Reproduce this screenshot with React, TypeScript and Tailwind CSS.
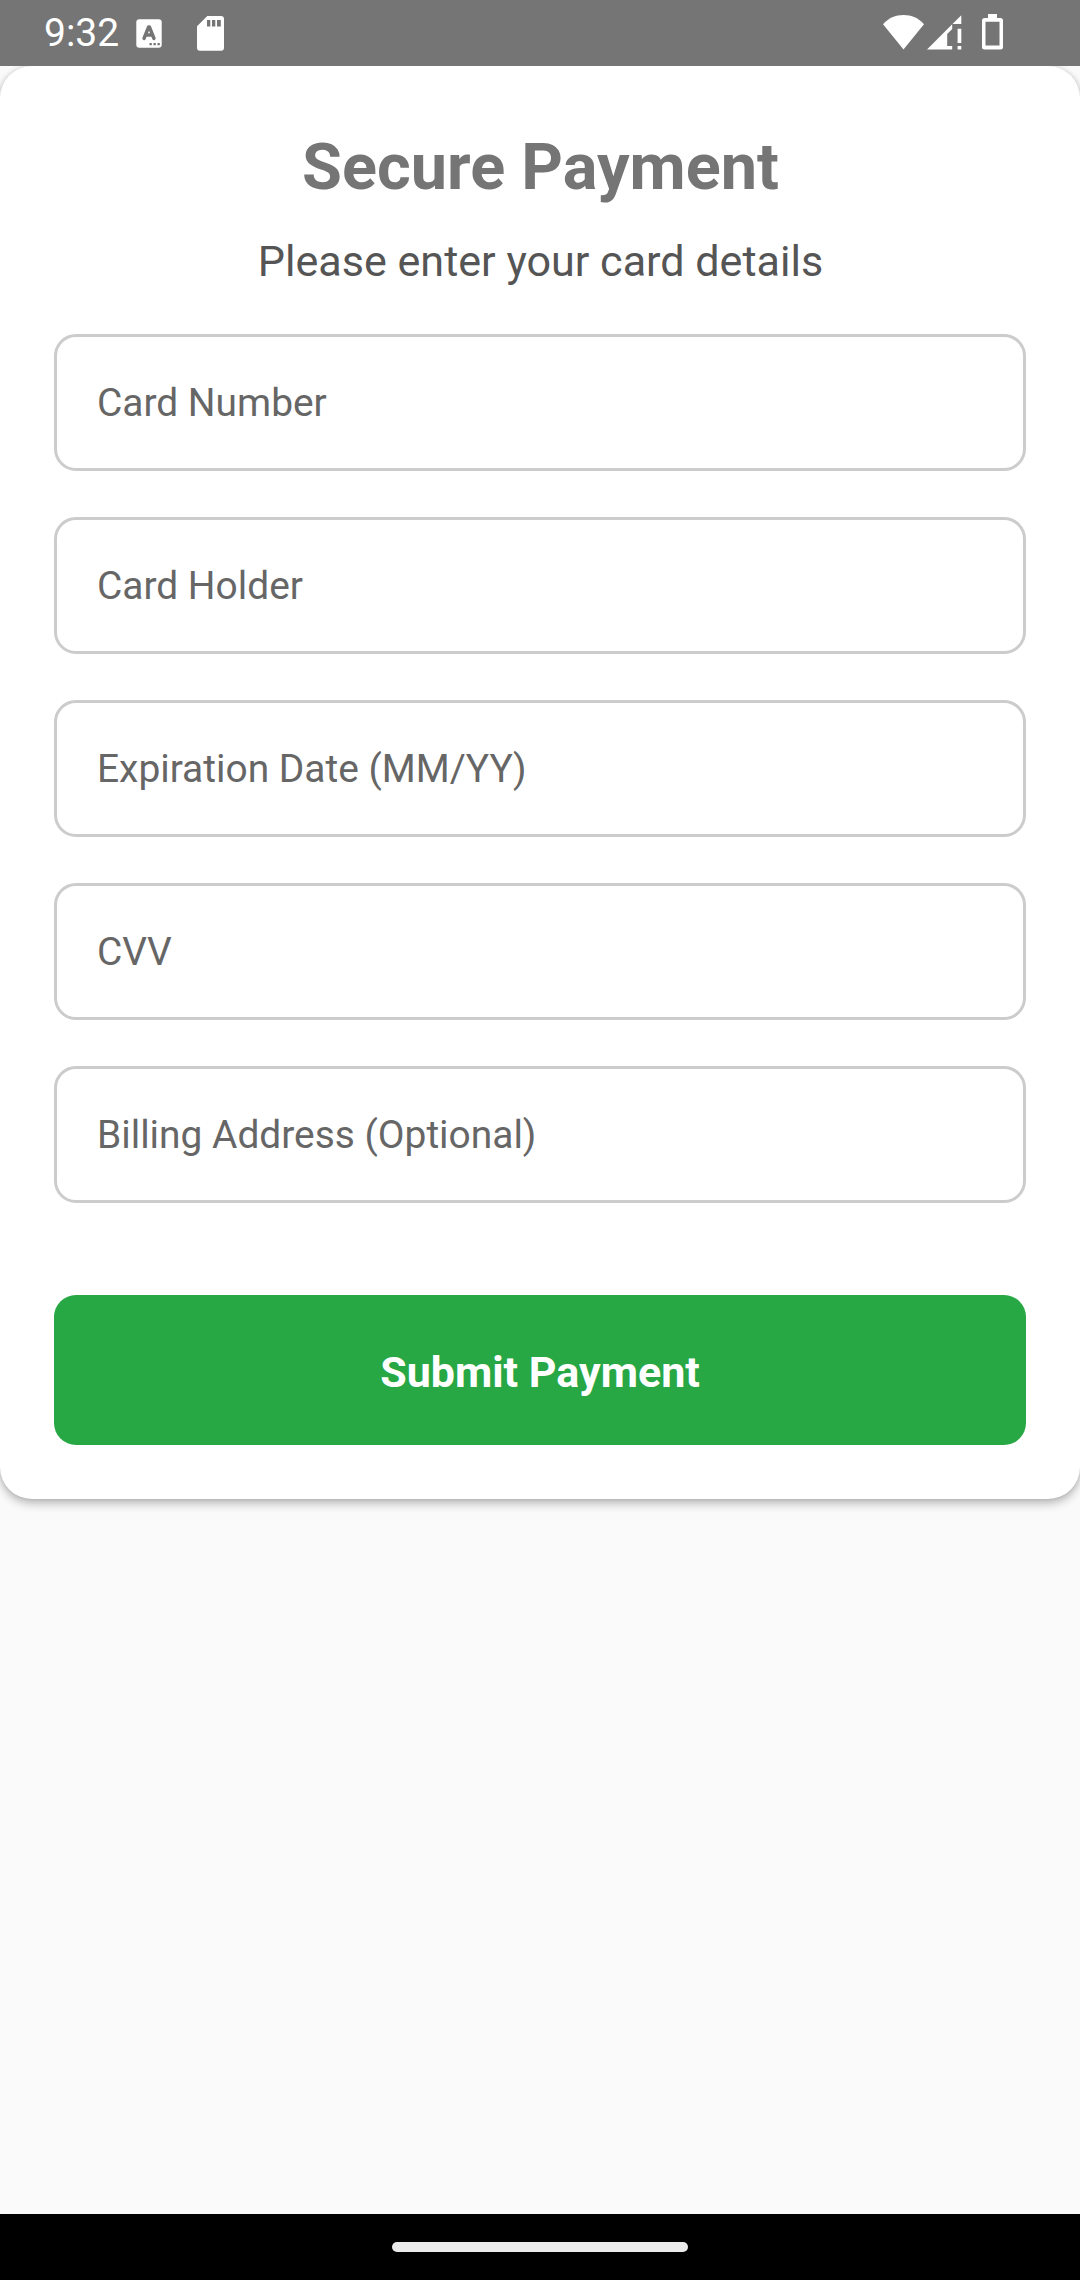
const fields = [
  'Card Number',
  'Card Holder',
  'Expiration Date (MM/YY)',
  'CVV',
  'Billing Address (Optional)',
];

function KeyboardIcon() {
  return (
    <svg className="ml-[17px] h-[29px] w-[26px]" viewBox="0 0 26 29">
      <rect x="0.3" y="0.2" width="25.4" height="28.5" rx="3" fill="#fff" />
      <path d="M8 19.5 12.6 8h.8L18 19.5M9.600 16h7" fill="none" stroke="#757575" strokeWidth="3.400" strokeLinejoin="round" strokeLinecap="round" />
      <path d="M13.5 24h2.3v2.3h-2.3zM17.5 24h2.3v2.3h-2.3zM21.5 24h2.3v2.3h-2.3z" fill="#757575" />
    </svg>
  );
}

function SdCardIcon() {
  return (
    <svg className="ml-[35px] h-[35px] w-[27px]" viewBox="0 0 27 35">
      <path d="M10.3 0H24a3 3 0 0 1 3 3v28.700a3 3 0 0 1-3 3H3a3 3 0 0 1-3-3V10.300z" fill="#fff" />
      <path d="M10 4h3.300v6.500H10zM15 4h3.300v6.500H15zM20 4h3.800v6.500H20z" fill="#757575" />
    </svg>
  );
}

function WifiIcon() {
  return (
    <svg className="h-[35px] w-[41px]" viewBox="0 0 41 35">
      <path d="M20.500 34.500 0 9.300C5.500 3 12.500 0 20.500 0S35.500 3 41 9.300z" fill="#fff" />
    </svg>
  );
}

function SignalIcon() {
  return (
    <svg className="ml-[3.500px] h-[35px] w-[35px]" viewBox="0 0 35 35">
      <path d="M0 34.600 25.200 9.300V14L20.200 19V31H25.200V34.600z" fill="#fff" />
      <path d="M34.300 0.200V9H25.500zM30.600 13.700h3.700v14.300h-3.700zM30.600 31h3.700v3.600h-3.700z" fill="#fff" />
    </svg>
  );
}

function BatteryIcon() {
  return (
    <svg className="ml-5 h-9 w-[21px]" viewBox="0 0 21 36">
      <path
        fillRule="evenodd"
        d="M6 0h9v4h3.500A2.500 2.500 0 0 1 21 6.500V33a2.500 2.500 0 0 1-2.500 2.500h-16A2.500 2.500 0 0 1 0 33V6.500A2.500 2.500 0 0 1 2.500 4H6zM3.500 7.700V31.500h14V7.700z"
        fill="#fff"
      />
    </svg>
  );
}

function StatusBar() {
  return (
    <header className="relative z-10 flex h-[66px] items-start justify-between bg-[#757575] pl-[44px] pr-[77px]">
      <div className="flex">
        <span className="mt-[11px] w-[75px] text-[39px] leading-[45px] text-white">9:32</span>
        <div className="mt-[19px]"><KeyboardIcon /></div>
        <div className="mt-4"><SdCardIcon /></div>
      </div>
      <div className="flex">
        <div className="mt-[15px]"><WifiIcon /></div>
        <div className="mt-[15px]"><SignalIcon /></div>
        <div className="mt-[14px]"><BatteryIcon /></div>
      </div>
    </header>
  );
}

export default function App() {
  return (
    <div className="flex h-[2280px] w-[1080px] flex-col overflow-hidden bg-[#fafafa] font-[Roboto,sans-serif]">
      <StatusBar />
      <main className="flex-1">
        <form className="flex h-[1433px] flex-col rounded-[32px] bg-white px-[54px] shadow-[0_5px_10px_rgba(0,0,0,0.24),0_0_5px_rgba(0,0,0,0.14)]">
          <h1 className="mt-[63px] pl-px text-center text-[64.800px] leading-[76px] font-bold text-[#757575]">Secure Payment</h1>
          <p className="mt-[32px] pl-px text-center text-[43.100px] leading-[50px] text-[#555555]">Please enter your card details</p>
          <div className="mt-[47px] flex flex-col gap-[46px]">
            {fields.map((label) => (
              <input
                key={label}
                type="text"
                placeholder={label}
                className="h-[137px] rounded-[22px] border-3 border-[#cccccc] bg-white px-10 text-[38.900px] text-[#333333] placeholder:text-[#666666] placeholder:opacity-100"
              />
            ))}
          </div>
          <button type="button" className="mt-[92px] h-[150px] rounded-[22px] bg-[#28a745] pt-1 text-[43px] font-bold text-white">
            Submit Payment
          </button>
        </form>
      </main>
      <nav className="flex h-[66px] justify-center bg-black pt-7">
        <div className="h-[10px] w-[296px] rounded-full bg-[#ebebeb]" />
      </nav>
    </div>
  );
}
